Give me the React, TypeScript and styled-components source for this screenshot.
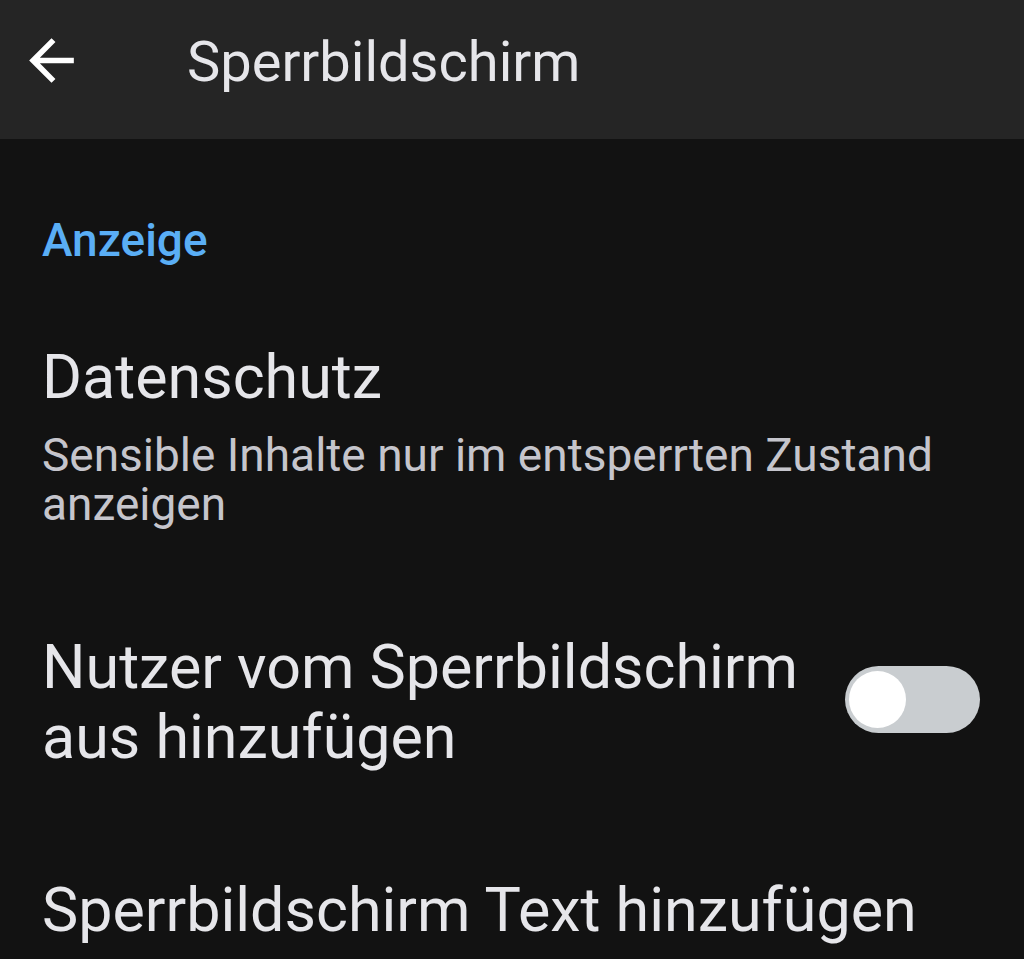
import React from "react"
import styled, { createGlobalStyle } from "styled-components"

const GlobalStyle = createGlobalStyle`
    html, body {
        margin: 0;
        padding: 0;
        background: #121212;
        font-family: Roboto, "Noto Sans", sans-serif;
    }
`

const SScreen = styled.div`
    display: flex;
    flex-direction: column;
    width: 1024px;
    height: 959px;
    overflow: hidden;
    background: #121212;
`

const SAppBar = styled.header`
    display: flex;
    align-items: flex-start;
    height: 139px;
    flex-shrink: 0;
    padding-top: 27px;
    box-sizing: border-box;
    background: #252525;
`

const SBackButton = styled.button`
    display: flex;
    align-items: center;
    justify-content: center;
    width: 67px;
    height: 67px;
    margin-left: 18px;
    padding: 0;
    border: none;
    background: transparent;
    color: #ffffff;
    cursor: pointer;
`

const STitle = styled.h1`
    margin: 3px 0 0 102px;
    font-size: 56px;
    line-height: 64px;
    font-weight: 400;
    color: #e6e6ea;
`

const SList = styled.div`
    display: flex;
    flex-direction: column;
    padding: 0 42px;
`

const SCategory = styled.div`
    padding-top: 73px;
    font-size: 46px;
    line-height: 56px;
    font-weight: 500;
    color: #5aaef5;
`

const SItem = styled.div<{ $top: number }>`
    display: flex;
    align-items: center;
    gap: 40px;
    padding-top: ${({ $top }) => $top}px;
`

const SItemText = styled.div`
    display: flex;
    flex-direction: column;
    flex: 1;
`

const SItemTitle = styled.div`
    font-size: 61px;
    line-height: 70px;
    color: #e6e6ea;
`

const SItemSummary = styled.div`
    margin-top: 19px;
    font-size: 46px;
    line-height: 49px;
    color: #c5c5cc;
`

const SSwitch = styled.div<{ $on: boolean }>`
    position: relative;
    width: 135px;
    height: 67px;
    margin: 0 2px 5px 0;
    border-radius: 34px;
    flex-shrink: 0;
    background: ${({ $on }) => ($on ? "#5aaef5" : "#c9cdd0")};
`

const SThumb = styled.span<{ $on: boolean }>`
    position: absolute;
    top: 5px;
    left: ${({ $on }) => ($on ? "74px" : "4px")};
    width: 57px;
    height: 57px;
    border-radius: 50%;
    background: #ffffff;
`

const ArrowBack = () => (
    <svg width="67" height="67" viewBox="0 0 24 24" fill="currentColor">
        <path d="M20 11H7.83l5.59-5.59L12 4l-8 8 8 8 1.41-1.41L7.83 13H20v-2z" />
    </svg>
)

export default function App() {
    return (
        <SScreen>
            <GlobalStyle />
            <SAppBar>
                <SBackButton aria-label="Zurück">
                    <ArrowBack />
                </SBackButton>
                <STitle>Sperrbildschirm</STitle>
            </SAppBar>
            <SList>
                <SCategory>Anzeige</SCategory>
                <SItem $top={74}>
                    <SItemText>
                        <SItemTitle>Datenschutz</SItemTitle>
                        <SItemSummary>
                            Sensible Inhalte nur im entsperrten Zustand anzeigen
                        </SItemSummary>
                    </SItemText>
                </SItem>
                <SItem $top={103}>
                    <SItemText>
                        <SItemTitle>Nutzer vom Sperrbildschirm aus hinzufügen</SItemTitle>
                    </SItemText>
                    <SSwitch $on={false}>
                        <SThumb $on={false} />
                    </SSwitch>
                </SItem>
                <SItem $top={103}>
                    <SItemText>
                        <SItemTitle>Sperrbildschirm Text hinzufügen</SItemTitle>
                    </SItemText>
                </SItem>
            </SList>
        </SScreen>
    )
}
